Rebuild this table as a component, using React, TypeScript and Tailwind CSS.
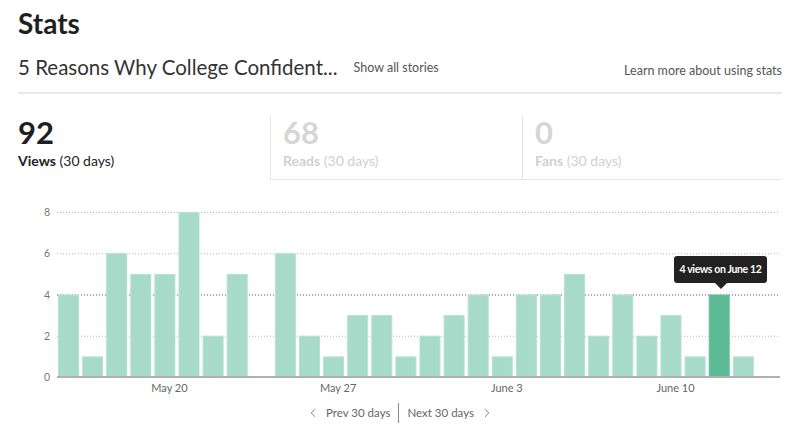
import { ChevronLeft, ChevronRight } from "lucide-react";

const views = [4, 1, 6, 5, 5, 8, 2, 5, 0, 6, 2, 1, 3, 3, 1, 2, 3, 4, 1, 4, 4, 5, 2, 4, 2, 3, 1, 4, 1, 0];
const ACTIVE = 27;

// plot geometry (svg px)
const PLOT_X = 39;
const PLOT_W = 723;
const TOP = 11;
const BASE = 176;
const UNIT = (BASE - TOP) / 8;
const PITCH = PLOT_W / 30;

const ticks = [
  { label: "May 20", i: 4 },
  { label: "May 27", i: 11 },
  { label: "June 3", i: 18 },
  { label: "June 10", i: 25 },
];

function Tab({ value, label, active, first, className = "" }: { value: string; label: string; active?: boolean; first?: boolean; className?: string }) {
  return (
    <div className={`pb-[9px] ${first ? "" : "border-l border-b border-[#e6e6e6] pl-[12px]"} ${className}`}>
      <div className={`text-[31px] leading-[32px] font-bold ${active ? "text-[#1f1f1f]" : "text-[#d6d6d6]"}`}>
        {value}
      </div>
      <div className={`mt-[4px] text-[14px] leading-[18px] ${active ? "text-[#222]" : "text-[#d0d0d0]"}`}>
        <span className="font-bold">{label}</span> (30 days)
      </div>
    </div>
  );
}

function Chart() {
  return (
    <svg width={762} height={196} viewBox="0 0 762 196" className="block">
      {[0, 2, 4, 6, 8].map((v) => {
        const y = BASE - v * UNIT;
        return (
          <g key={v}>
            <text x={32} y={y + 4} textAnchor="end" fontSize={10.5} fill="#777" fontFamily="Lato, sans-serif">
              {v}
            </text>
            {v > 0 && (
              <line
                x1={PLOT_X}
                x2={PLOT_X + PLOT_W}
                y1={y + 0.5}
                y2={y + 0.5}
                stroke={v === 4 ? "#555" : "#b5b5b5"}
                strokeWidth={1}
                strokeDasharray="1 2"
              />
            )}
          </g>
        );
      })}
      {views.map((v, i) =>
        v > 0 ? (
          <rect
            key={i}
            x={PLOT_X + 1.5 + i * PITCH}
            y={BASE - v * UNIT + 0.5}
            width={20}
            height={v * UNIT - 0.5}
            fill={i === ACTIVE ? "#5dba94" : "#a8dac9"}
            stroke={i === ACTIVE ? "#63c09a" : "#b4e2d2"}
            strokeWidth={1}
          />
        ) : null
      )}
      <rect x={PLOT_X} y={BASE - 1} width={PLOT_W} height={2} fill="#b0b0b0" />
      {ticks.map((t) => (
        <text
          key={t.label}
          x={PLOT_X + (t.i + 0.5) * PITCH + 4}
          y={BASE + 15}
          textAnchor="middle"
          fontSize={11}
          fill="#666"
          fontFamily="Lato, sans-serif"
        >
          {t.label}
        </text>
      ))}
    </svg>
  );
}

export default function App() {
  return (
    <div className="w-[800px] h-[430px] bg-white overflow-hidden px-[18px] pt-[6px] font-['Lato',sans-serif] text-[#222]">
      {/* Header */}
      <h1 className="text-[28px] leading-[34px] font-bold text-[#1f1f1f]">Stats</h1>

      <div className="mt-[13px] flex items-end justify-between border-b-2 border-[#e8e8e8] pb-[11px]">
        <div className="flex items-end gap-[16px]">
          <span className="text-[20.5px] leading-[28px] text-[#333]">5 Reasons Why College Confident...</span>
          <span className="mb-[5px] text-[12.5px] leading-[16px] text-[#555]">Show all stories</span>
        </div>
        <span className="mb-[2px] text-[12.5px] leading-[16px] text-[#555]">Learn more about using stats</span>
      </div>

      {/* Tabs */}
      <div className="mt-[22px] flex">
        <Tab value="92" label="Views" active first className="w-[252px]" />
        <Tab value="68" label="Reads" className="w-[252px]" />
        <Tab value="0" label="Fans" className="flex-1" />
      </div>

      {/* Chart */}
      <div className="relative mt-[21px]">
        <Chart />
        <div className="absolute left-[656px] top-[55px] flex w-[93px] flex-col items-center">
          <div className="w-full rounded-[3px] bg-[#222] py-[5px] text-center text-[10.5px] leading-[17px] font-bold tracking-[-0.35px] text-white whitespace-nowrap">
            4 views on June 12
          </div>
          <div className="h-0 w-0 border-x-[6px] border-t-[6px] border-x-transparent border-t-[#222]" />
        </div>
      </div>

      {/* Pagination */}
      <div className="mt-[6px] flex items-center justify-center text-[11.5px] text-[#666]">
        <button className="flex items-center gap-[6px] pr-[8px]">
          <ChevronLeft className="h-[14px] w-[14px]" strokeWidth={1.5} />
          Prev 30 days
        </button>
        <span className="h-[20px] w-px bg-[#888]" />
        <button className="flex items-center gap-[6px] pl-[8px]">
          Next 30 days
          <ChevronRight className="h-[14px] w-[14px]" strokeWidth={1.5} />
        </button>
      </div>
    </div>
  );
}
